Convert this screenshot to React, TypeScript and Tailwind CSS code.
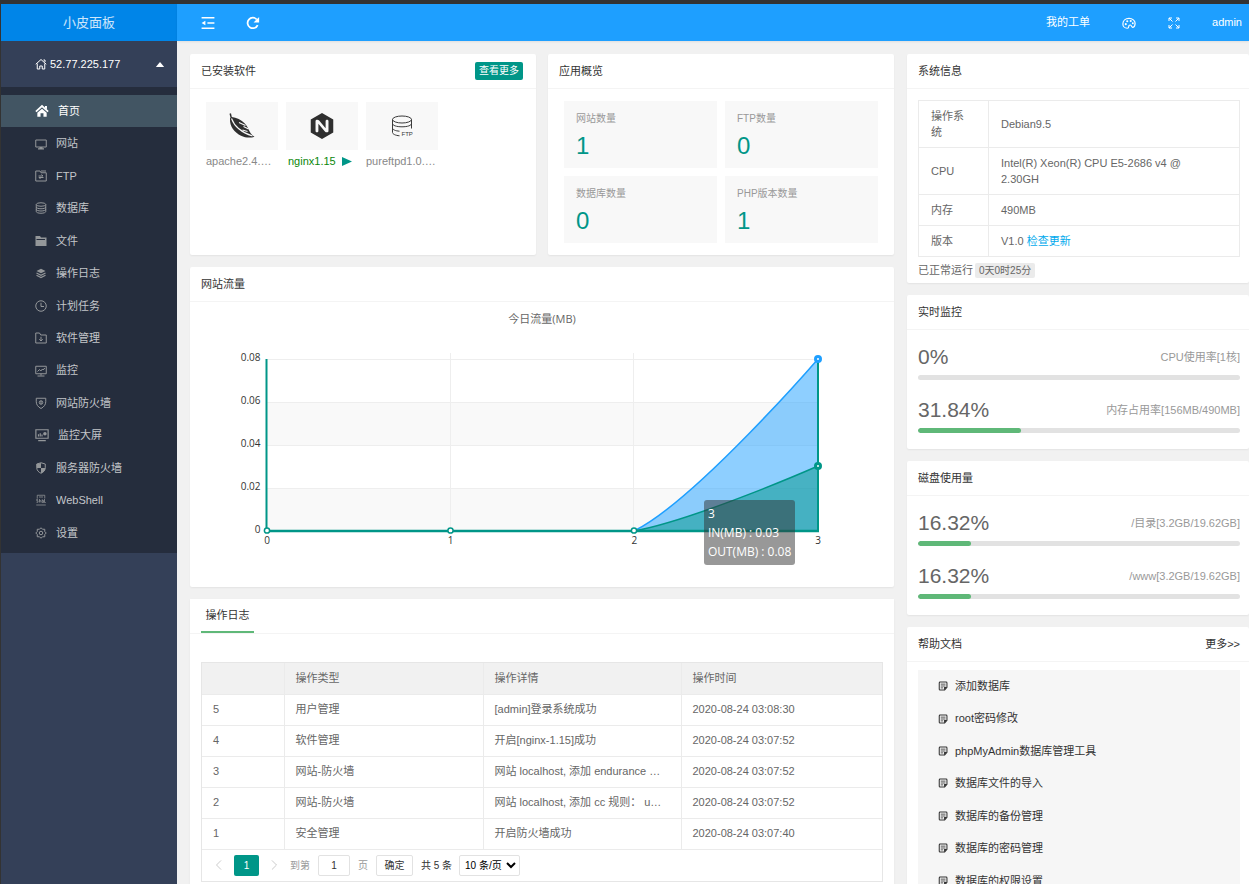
import React, { useState } from 'react';
import { SiNginx } from 'react-icons/si';

const CJK = "font-['Liberation_Sans','Noto_Sans_CJK_SC',sans-serif]";

// ---------- icons ----------

function Icon({ children, className = 'size-3' }: { children: React.ReactNode; className?: string }) {
  return (
    <svg
      viewBox="0 0 24 24"
      className={`shrink-0 ${className}`}
      fill="none"
      stroke="currentColor"
      strokeWidth="2"
      aria-hidden="true"
    >
      {children}
    </svg>
  );
}

const HomeIcon = () => (
  <Icon className="size-[14px]">
    <path d="M1.500 13 12 3.500 22.500 13" strokeWidth="3" />
    <path d="M17 3.500h3.500v6L17 6.500z M12 8l8 7v7h-5.500v-6h-5v6H4v-7z" fill="currentColor" stroke="none" />
  </Icon>
);

const HomeOutlineIcon = () => (
  <Icon>
    <path d="M1.500 12.500 12 3l10.500 9.500M4.500 11v11h5v-6h5v6h5V11M17 4h3v4" />
  </Icon>
);

const SiteIcon = () => (
  <Icon>
    <path d="M1.500 4h21v14h-21z" />
    <path d="M9 18h6v2.500H9zM6 20.500h12V23H6z" fill="currentColor" stroke="none" />
  </Icon>
);

const FtpIcon = () => (
  <Icon>
    <path d="M1.500 22V2H10l2 3.500h10.500V22zM12 2h10" />
    <path d="M7 12h9l-3-3M17 15H8l3 3" />
  </Icon>
);

const DatabaseIcon = () => (
  <Icon>
    <ellipse cx="12" cy="5" rx="9.500" ry="3.500" />
    <path d="M2.500 5v14c0 2 4 3.500 9.500 3.500s9.500-1.500 9.500-3.500V5M2.500 10c0 2 4 3.500 9.500 3.500s9.500-1.500 9.500-3.500M2.500 14.500c0 2 4 3.500 9.500 3.500s9.500-1.500 9.500-3.500" />
  </Icon>
);

const FolderIcon = () => (
  <Icon>
    <path d="M1 2h9l2 3h11v17H1z" fill="currentColor" stroke="none" />
    <path d="M3 9h17" stroke="#252d3d" />
  </Icon>
);

const LayersIcon = () => (
  <Icon>
    <path d="M12 3.500 21 8l-9 4.500L3 8z" fill="currentColor" stroke="none" />
    <path d="m3 12 9 4.500 9-4.500M3 16.500 12 21l9-4.500" strokeWidth="2.500" />
  </Icon>
);

const ClockIcon = () => (
  <Icon>
    <circle cx="12" cy="12" r="10.500" />
    <path d="M12 5.500V13h6" />
  </Icon>
);

const PackageIcon = () => (
  <Icon>
    <path d="M1.500 22V2H9l2.500 4h11v16zM12 9.500V18M8.500 14.500 12 18l3.500-3.500" />
  </Icon>
);

const MonitorIcon = () => (
  <Icon>
    <path d="M1.500 2.500h21v15h-21zM12 17.500V21M5 22h14" />
    <path d="m5 13 4-4 2.500 3L15 8l1.500 2L19.500 6" />
  </Icon>
);

const ShieldIcon = () => (
  <Icon>
    <path d="M12 23C6 20 2.500 15 2.500 9.500V2.500h19v7C21.500 15 18 20 12 23z" />
    <circle cx="12" cy="11" r="3.500" />
    <path d="M12 8v6" />
  </Icon>
);

const ScreenIcon = () => (
  <Icon className="size-[14px]">
    <path d="M1.500 3h21v14.500h-21zM5.500 21.500h13" />
    <path d="M6 10.500v4M9 9v5.500M12 11v3.500" />
    <circle cx="17" cy="10" r="3" fill="currentColor" stroke="none" />
  </Icon>
);

const ShieldHalfIcon = () => (
  <Icon>
    <path d="M12 22.500c-5-2-8.500-6-8.500-11V4L12 1.500 20.500 4v7.500c0 5-3.500 9-8.500 11z" />
    <path d="M12 2v10H3.500V4zM12 12h8.500c0 5-3.500 9-8.500 10.500z" fill="currentColor" stroke="none" />
  </Icon>
);

const ShellIcon = () => (
  <Icon>
    <path d="M4.500 9V2.500h15V9M2.500 22h19M8 6h8" strokeWidth="1.500" />
    <path d="M6 10.500H3.500v3H6v3H3M9 10v7M9 13.500h3V17M14.500 10.500v6.500h2.500v-4h-2.500M19 10v7h2.500" strokeWidth="1.500" />
  </Icon>
);

const GearIcon = () => (
  <Icon>
    <path d="m12 1.500 3 3h4.500v4.500l3 3-3 3v4.500H15l-3 3-3-3H4.500V15l-3-3 3-3V4.500H9z" />
    <circle cx="12" cy="12" r="3.500" />
  </Icon>
);

const NoteIcon = () => (
  <Icon className="size-[10px]">
    <path d="M16 21.500H5q-2 0-2-2v-15q0-2 2-2h14.500q2 0 2 2V15z" strokeWidth="2.500" />
    <path d="M6.500 7.500h11.500M6.500 12h11.500M6.500 16.500h6" strokeWidth="2" />
    <path d="M14.500 22v-7.500H22z" fill="currentColor" stroke="none" />
  </Icon>
);

const FoldIcon = () => (
  <Icon className="size-[14px]">
    <path d="M1 3h22M11 12h12M1 21h22" strokeWidth="2.500" />
    <path d="M1 12l6.500-4v8z" fill="currentColor" stroke="none" />
  </Icon>
);

const RefreshIcon = () => (
  <Icon className="size-[14px]">
    <path d="M20 15.500A9 9 0 1 1 18.500 6" strokeWidth="3" />
    <path d="M22.500 1.500V11H13z" fill="currentColor" stroke="none" />
  </Icon>
);

const PaletteIcon = () => (
  <Icon className="size-[14px]">
    <path d="M9 21C4.500 21 1.500 17.500 1.500 13.500c0-5.500 4.500-9.500 10.500-9.500S22.500 8 22.500 12.500c0 4-1.500 6.500-4 7-2 .4-2-3.500-4-4s-3 1-3 3S10.500 21 9 21z" />
    <g fill="currentColor" stroke="none">
      <circle cx="6.500" cy="14" r="1.800" />
      <circle cx="9" cy="9" r="1.800" />
      <circle cx="15" cy="8.500" r="1.800" />
      <circle cx="18.500" cy="12.500" r="1.600" />
    </g>
  </Icon>
);

const FullscreenIcon = () => (
  <Icon>
    <path d="M2 8V2h6M2 2l7 7M16 2h6v6M22 2l-7 7M2 16v6h6M2 22l7-7M22 16v6h-6M22 22l-7-7" />
  </Icon>
);

const FeatherIcon = () => (
  <svg viewBox="0 0 26 26" className="size-[26px]" aria-hidden="true">
    <path
      d="M.5.800 2 .200 2.800 4c4.500.5 9.500 2.800 13 6.500 2.500 2.700 3.600 5.500 5 8.200 1 2 2.600 3.900 4.700 5-3.500 1.300-9 1.300-13.500-1C5.500 19.500.5 14 1 5.500l.5-.8z"
      fill="#2f2f2f"
    />
    <path d="M2.500 5.500C5 12.500 11 19 23.500 23" stroke="#f8f8f8" strokeWidth="1.100" fill="none" />
    <path d="m10 9.500 6.500 3M14.500 13.500l5 2.500M13.500 17l5 1.500" stroke="#f8f8f8" strokeWidth="1.100" fill="none" />
  </svg>
);

const FtpStackIcon = () => (
  <svg viewBox="0 0 22 22" className="size-[22px]" fill="none" stroke="#3a3a3a" aria-hidden="true">
    <ellipse cx="11" cy="4.500" rx="9.500" ry="3.500" />
    <path d="M1.500 4.500v13c0 1.500 3 3 7 3.300M20.500 4.500v9M1.500 8.500c0 2 4 3.300 9.500 3.300s9.500-1.300 9.500-3.300M1.500 13c0 1.700 3 2.900 7 3.200" />
    <text x="10.500" y="20.500" fontSize="6" fill="#3a3a3a" stroke="none" fontFamily="Liberation Sans">
      FTP
    </text>
  </svg>
);

const CaretUp = () => (
  <svg viewBox="0 0 10 6" className="h-[5px] w-[10px]" fill="currentColor" aria-hidden="true">
    <path d="M5 0l5 6H0z" />
  </svg>
);

// ---------- data ----------

const menu = [
  { label: '首页', icon: HomeIcon },
  { label: '网站', icon: SiteIcon },
  { label: 'FTP', icon: FtpIcon },
  { label: '数据库', icon: DatabaseIcon },
  { label: '文件', icon: FolderIcon },
  { label: '操作日志', icon: LayersIcon },
  { label: '计划任务', icon: ClockIcon },
  { label: '软件管理', icon: PackageIcon },
  { label: '监控', icon: MonitorIcon },
  { label: '网站防火墙', icon: ShieldIcon },
  { label: '监控大屏', icon: ScreenIcon },
  { label: '服务器防火墙', icon: ShieldHalfIcon },
  { label: 'WebShell', icon: ShellIcon },
  { label: '设置', icon: GearIcon },
];

const overview = [
  { label: '网站数量', value: 1 },
  { label: 'FTP数量', value: 0 },
  { label: '数据库数量', value: 0 },
  { label: 'PHP版本数量', value: 1 },
];

const logs = [
  { id: 5, type: '用户管理', detail: '[admin]登录系统成功', time: '2020-08-24 03:08:30' },
  { id: 4, type: '软件管理', detail: '开启[nginx-1.15]成功', time: '2020-08-24 03:07:52' },
  { id: 3, type: '网站-防火墙', detail: '网站 localhost, 添加 endurance …', time: '2020-08-24 03:07:52' },
  { id: 2, type: '网站-防火墙', detail: '网站 localhost, 添加 cc 规则： u…', time: '2020-08-24 03:07:52' },
  { id: 1, type: '安全管理', detail: '开启防火墙成功', time: '2020-08-24 03:07:40' },
];

const docs = [
  '添加数据库',
  'root密码修改',
  'phpMyAdmin数据库管理工具',
  '数据库文件的导入',
  '数据库的备份管理',
  '数据库的密码管理',
  '数据库的权限设置',
];

// ---------- building blocks ----------

function Card({
  title,
  extra,
  children,
  className = '',
}: {
  title: string;
  extra?: React.ReactNode;
  children: React.ReactNode;
  className?: string;
}) {
  return (
    <section className={`rounded-xs bg-white shadow-[0_1px_2px_rgba(0,0,0,0.06)] ${className}`}>
      <header className="flex h-[35px] items-center justify-between border-b border-[#f4f4f4] pl-[11px] pr-[9px] text-[#333]">
        <h2>{title}</h2>
        {extra}
      </header>
      {children}
    </section>
  );
}

function Usage({ percent, label }: { percent: number; label: string }) {
  return (
    <div>
      <div className="flex h-7 items-center justify-between">
        <span className="text-[21px] text-[#666]">{percent}%</span>
        <span className="text-[#999]">{label}</span>
      </div>
      <div className="mt-1 h-[5px] overflow-hidden rounded-full bg-[#e2e2e2]">
        <div className="h-full rounded-full bg-[#5fb878]" style={{ width: `${percent}%` }} />
      </div>
    </div>
  );
}

function TrafficChart() {
  const yLabels = ['0.08', '0.06', '0.04', '0.02', '0'];
  return (
    <div className="relative">
      <svg viewBox="0 0 704 285" className="block w-full font-['Open_Sans','Noto_Sans_CJK_SC',sans-serif]">
        <text x="352" y="21" fontSize="11" fill="#666" textAnchor="middle">
          今日流量(MB)
        </text>
        <rect x="77" y="100" width="551" height="43" fill="#f9f9f9" />
        <rect x="77" y="186" width="551" height="43" fill="#f9f9f9" />
        <g stroke="#eee">
          <path d="M77 57.500h551M77 100.500h551M77 143.500h551M77 186.500h551" />
          <path d="M260.500 51v178M443.500 51v178" />
        </g>
        {yLabels.map((l, i) => (
          <text key={l} x="70.500" y={59 + i * 43} fontSize="10" fill="#333" textAnchor="end">
            {l}
          </text>
        ))}
        {[0, 1, 2, 3].map((n) => (
          <text key={n} x={77 + n * 183.700} y="242" fontSize="10" fill="#333" textAnchor="middle">
            {n}
          </text>
        ))}
        <path d="M444 229C505 199 628 57 628 57V229z" fill="#1e9fff" fillOpacity="0.5" />
        <path d="M444 229C505 218 628 164 628 164V229z" fill="#009688" fillOpacity="0.5" />
        <path d="M76.500 57v172M628 57v172" stroke="#009688" strokeWidth="2" />
        <path d="M444 229C505 199 628 57 628 57" fill="none" stroke="#1e9fff" strokeWidth="1.500" />
        <path d="M77 229H444C505 218 628 164 628 164" fill="none" stroke="#009688" strokeWidth="1.500" />
        <path d="M76 229H629" stroke="#009688" strokeWidth="2.500" />
        <g fill="#fff" stroke="#009688" strokeWidth="1.500">
          <circle cx="77" cy="228.500" r="2.600" />
          <circle cx="260.500" cy="228.500" r="2.600" />
          <circle cx="444" cy="228.500" r="2.600" />
        </g>
        <circle cx="628" cy="164" r="2.500" fill="#fff" stroke="#009688" strokeWidth="3" />
        <circle cx="628" cy="57" r="2.500" fill="#fff" stroke="#1e9fff" strokeWidth="3" />
      </svg>
      <div className="absolute left-[73%] top-[198px] whitespace-nowrap rounded-[3px] bg-[#323232]/50 p-1 font-['Open_Sans',sans-serif] text-[12px]/[19px] text-white">
        <p>3</p>
        <p>IN(MB) : 0.03</p>
        <p>OUT(MB) : 0.08</p>
      </div>
    </div>
  );
}

function LogTable() {
  const cell = 'h-[31px] border-b border-[#ebebeb] pl-[11px] pr-3 font-normal';
  return (
    <div className="border border-[#e6e6e6]">
      <table className="w-full table-fixed border-collapse text-left">
        <thead className="bg-[#f1f1f1]">
          <tr>
            <th className={`${cell} w-[82px] border-r`}></th>
            <th className={`${cell} w-[199px] border-r`}>操作类型</th>
            <th className={`${cell} w-[198px] border-r`}>操作详情</th>
            <th className={cell}>操作时间</th>
          </tr>
        </thead>
        <tbody>
          {logs.map((row) => (
            <tr key={row.id}>
              <td className={`${cell} border-r`}>{row.id}</td>
              <td className={`${cell} border-r`}>{row.type}</td>
              <td className={`${cell} truncate border-r`}>{row.detail}</td>
              <td className={cell}>{row.time}</td>
            </tr>
          ))}
        </tbody>
      </table>
      <Pager />
    </div>
  );
}

function Pager() {
  const [page, setPage] = useState('1');
  return (
    <div className="flex h-[31px] items-center pl-3 text-[10px] text-[#333]">
      <button aria-label="上一页" className="w-5 text-[#c0c0c0]">
        <Icon className="size-[10px]">
          <path d="M17 1 6 12l11 11" />
        </Icon>
      </button>
      <button className="h-[21px] w-[25px] rounded-xs bg-[#009688] text-white">1</button>
      <button aria-label="下一页" className="flex w-[31px] pl-[10px] text-[#c0c0c0]">
        <Icon className="size-[10px]">
          <path d="m7 1 11 11L7 23" />
        </Icon>
      </button>
      <label className="flex items-center text-[#999]">
        到第
        <input
          value={page}
          onChange={(e) => setPage(e.target.value)}
          className="mx-2 h-[21px] w-[32px] rounded-xs border border-[#e2e2e2] text-center text-[#333]"
        />
        页
      </label>
      <button className="ml-2 h-[21px] w-[37px] rounded-xs border border-[#e2e2e2]">确定</button>
      <span className="ml-2 w-[38px]">共 5 条</span>
      <select
        aria-label="每页条数"
        className="h-[21px] w-[61px] rounded-xs border border-[#e2e2e2] bg-white pl-px text-black"
      >
        <option>10 条/页</option>
      </select>
    </div>
  );
}

// ---------- page ----------

function Sidebar() {
  return (
    <aside className="w-[176px] shrink-0 bg-[#344058] text-white">
      <div className="flex h-[37px] items-center justify-center bg-[#0085e8] text-[13px] text-white/80">小皮面板</div>
      <button className="flex h-[46px] w-full items-center gap-[3px] pl-[34px] pr-3">
        <HomeOutlineIcon />
        <span className="flex-1 text-left">52.77.225.177</span>
        <CaretUp />
      </button>
      <nav className="bg-[#252d3d] pt-2 pb-1">
        <ul className="grid h-[454px] auto-rows-fr">
          {menu.map(({ label, icon: MenuIcon }, i) => (
            <li key={label}>
              <a
                href="#"
                className={`flex h-full items-center gap-[9px] pl-[34px] ${
                  i === 0 ? 'bg-[#425563] text-white' : 'text-[#c3c6ca]'
                }`}
              >
                <span className={i === 0 ? '' : 'text-[#94979a]'}>
                  <MenuIcon />
                </span>
                {label}
              </a>
            </li>
          ))}
        </ul>
      </nav>
    </aside>
  );
}

export default function App() {
  return (
    <div
      className={`flex h-screen overflow-hidden border-t-4 border-l border-[#333] bg-[#f1f1f1] text-[11px] text-[#666] ${CJK}`}
    >
      <Sidebar />

      <div className="min-w-0 flex-1">
        <header className="flex h-[37px] items-center bg-[#1e9fff] pl-6 text-white shadow-[0_1px_2px_rgba(0,0,0,0.08)]">
          <button aria-label="收起菜单">
            <FoldIcon />
          </button>
          <button aria-label="刷新" className="ml-[31px]">
            <RefreshIcon />
          </button>
          <div className="ml-auto flex items-center">
            <a href="#">我的工单</a>
            <button aria-label="主题" className="ml-8">
              <PaletteIcon />
            </button>
            <button aria-label="全屏" className="ml-8">
              <FullscreenIcon />
            </button>
            <button className="ml-8 mr-[7px]">admin</button>
          </div>
        </header>

        <main className="flex gap-[13px] pl-[13px] pt-[13px]">
          <div className="flex min-w-0 flex-1 flex-col gap-3">
            <div className="grid grid-cols-2 gap-3">
              <Card
                title="已安装软件"
                extra={
                  <a href="#" className="mr-1 rounded-xs bg-[#009688] px-1 text-[10px]/[18px] text-white">
                    查看更多
                  </a>
                }
              >
                <div className="flex gap-2 px-4 py-[13px] text-[#888]">
                  <div className="w-[72px]">
                    <div className="flex h-12 items-center justify-center bg-[#f8f8f8]">
                      <FeatherIcon />
                    </div>
                    <p className="mt-[3px]">apache2.4.…</p>
                  </div>
                  <div className="w-[72px]">
                    <div className="flex h-12 items-center justify-center bg-[#f8f8f8] text-[#2f2f2f]">
                      <SiNginx className="size-[26px]" />
                    </div>
                    <p className="mt-[3px] flex items-center gap-[6px] pl-[2px] text-[#0a870a]">
                      nginx1.15
                      <svg viewBox="0 0 10 9" className="h-[9px] w-[10px]" fill="#009688" aria-hidden="true">
                        <path d="M0 0l10 4.500L0 9z" />
                      </svg>
                    </p>
                  </div>
                  <div className="w-[72px]">
                    <div className="flex h-12 items-center justify-center bg-[#f8f8f8]">
                      <FtpStackIcon />
                    </div>
                    <p className="mt-[3px]">pureftpd1.0.…</p>
                  </div>
                </div>
              </Card>

              <Card title="应用概览">
                <div className="grid grid-cols-2 gap-2 px-4 pt-3 pb-3">
                  {overview.map((item) => (
                    <div key={item.label} className="h-[67px] bg-[#f8f8f8] px-3 pt-[10px]">
                      <h3 className="text-[10px]/[15px] text-[#999]">{item.label}</h3>
                      <p className="mt-1 text-[24px]/[32px] text-[#009688]">{item.value}</p>
                    </div>
                  ))}
                </div>
              </Card>
            </div>

            <Card title="网站流量">
              <TrafficChart />
            </Card>

            <section className="bg-white px-[11px] pb-4 shadow-[0_1px_2px_rgba(0,0,0,0.06)]">
              <div className="-mx-[11px] mb-7 flex h-[35px] border-b border-[#f4f4f4] px-[11px] text-[#333]">
                <button className="w-[53px] border-b-2 border-[#5fb878]">操作日志</button>
              </div>
              <LogTable />
            </section>
          </div>

          <div className="flex w-[342px] shrink-0 flex-col gap-3">
            <Card title="系统信息">
              <div className="pt-[11px] pr-[9px] pb-1 pl-[11px]">
                <table className="w-full border-collapse border border-[#ebebeb] text-left leading-4 [&_td]:border [&_td]:border-[#ebebeb] [&_td]:px-3 [&_td]:py-[7px] [&_th]:w-[70px] [&_th]:border [&_th]:border-[#ebebeb] [&_th]:py-[7px] [&_th]:pr-4 [&_th]:pl-3 [&_th]:font-normal">
                  <tbody>
                    <tr>
                      <th>操作系统</th>
                      <td>Debian9.5</td>
                    </tr>
                    <tr>
                      <th>CPU</th>
                      <td>
                        Intel(R) Xeon(R) CPU E5-2686 v4 @<br />
                        2.30GH
                      </td>
                    </tr>
                    <tr>
                      <th>内存</th>
                      <td>490MB</td>
                    </tr>
                    <tr>
                      <th>版本</th>
                      <td>
                        V1.0{' '}
                        <a href="#" className="text-[#01aaed]">
                          检查更新
                        </a>
                      </td>
                    </tr>
                  </tbody>
                </table>
                <p className="flex h-[22px] items-center pt-1">
                  已正常运行
                  <span className="ml-[2px] rounded-xs bg-[#ebebeb] px-1 text-[10px]/[15px]">0天0时25分</span>
                </p>
              </div>
            </Card>

            <Card title="实时监控">
              <div className="flex flex-col gap-4 pt-[13px] pr-[9px] pb-4 pl-[11px]">
                <Usage percent={0} label="CPU使用率[1核]" />
                <Usage percent={31.84} label="内存占用率[156MB/490MB]" />
              </div>
            </Card>

            <Card title="磁盘使用量">
              <div className="flex flex-col gap-4 pt-[13px] pr-[9px] pb-4 pl-[11px]">
                <Usage percent={16.32} label="/目录[3.2GB/19.62GB]" />
                <Usage percent={16.32} label="/www[3.2GB/19.62GB]" />
              </div>
            </Card>

            <Card title="帮助文档" extra={<a href="#">更多&gt;&gt;</a>}>
              <div className="pt-2 pr-[9px] pb-3 pl-[11px]">
                <ul className="grid h-[227px] auto-rows-fr bg-[#f6f6f6] pl-5 text-[#333]">
                  {docs.map((doc) => (
                    <li key={doc} className="flex items-center">
                      <a href="#" className="flex items-center gap-[7px]">
                        <NoteIcon />
                        {doc}
                      </a>
                    </li>
                  ))}
                </ul>
              </div>
            </Card>
          </div>
        </main>
      </div>
    </div>
  );
}
